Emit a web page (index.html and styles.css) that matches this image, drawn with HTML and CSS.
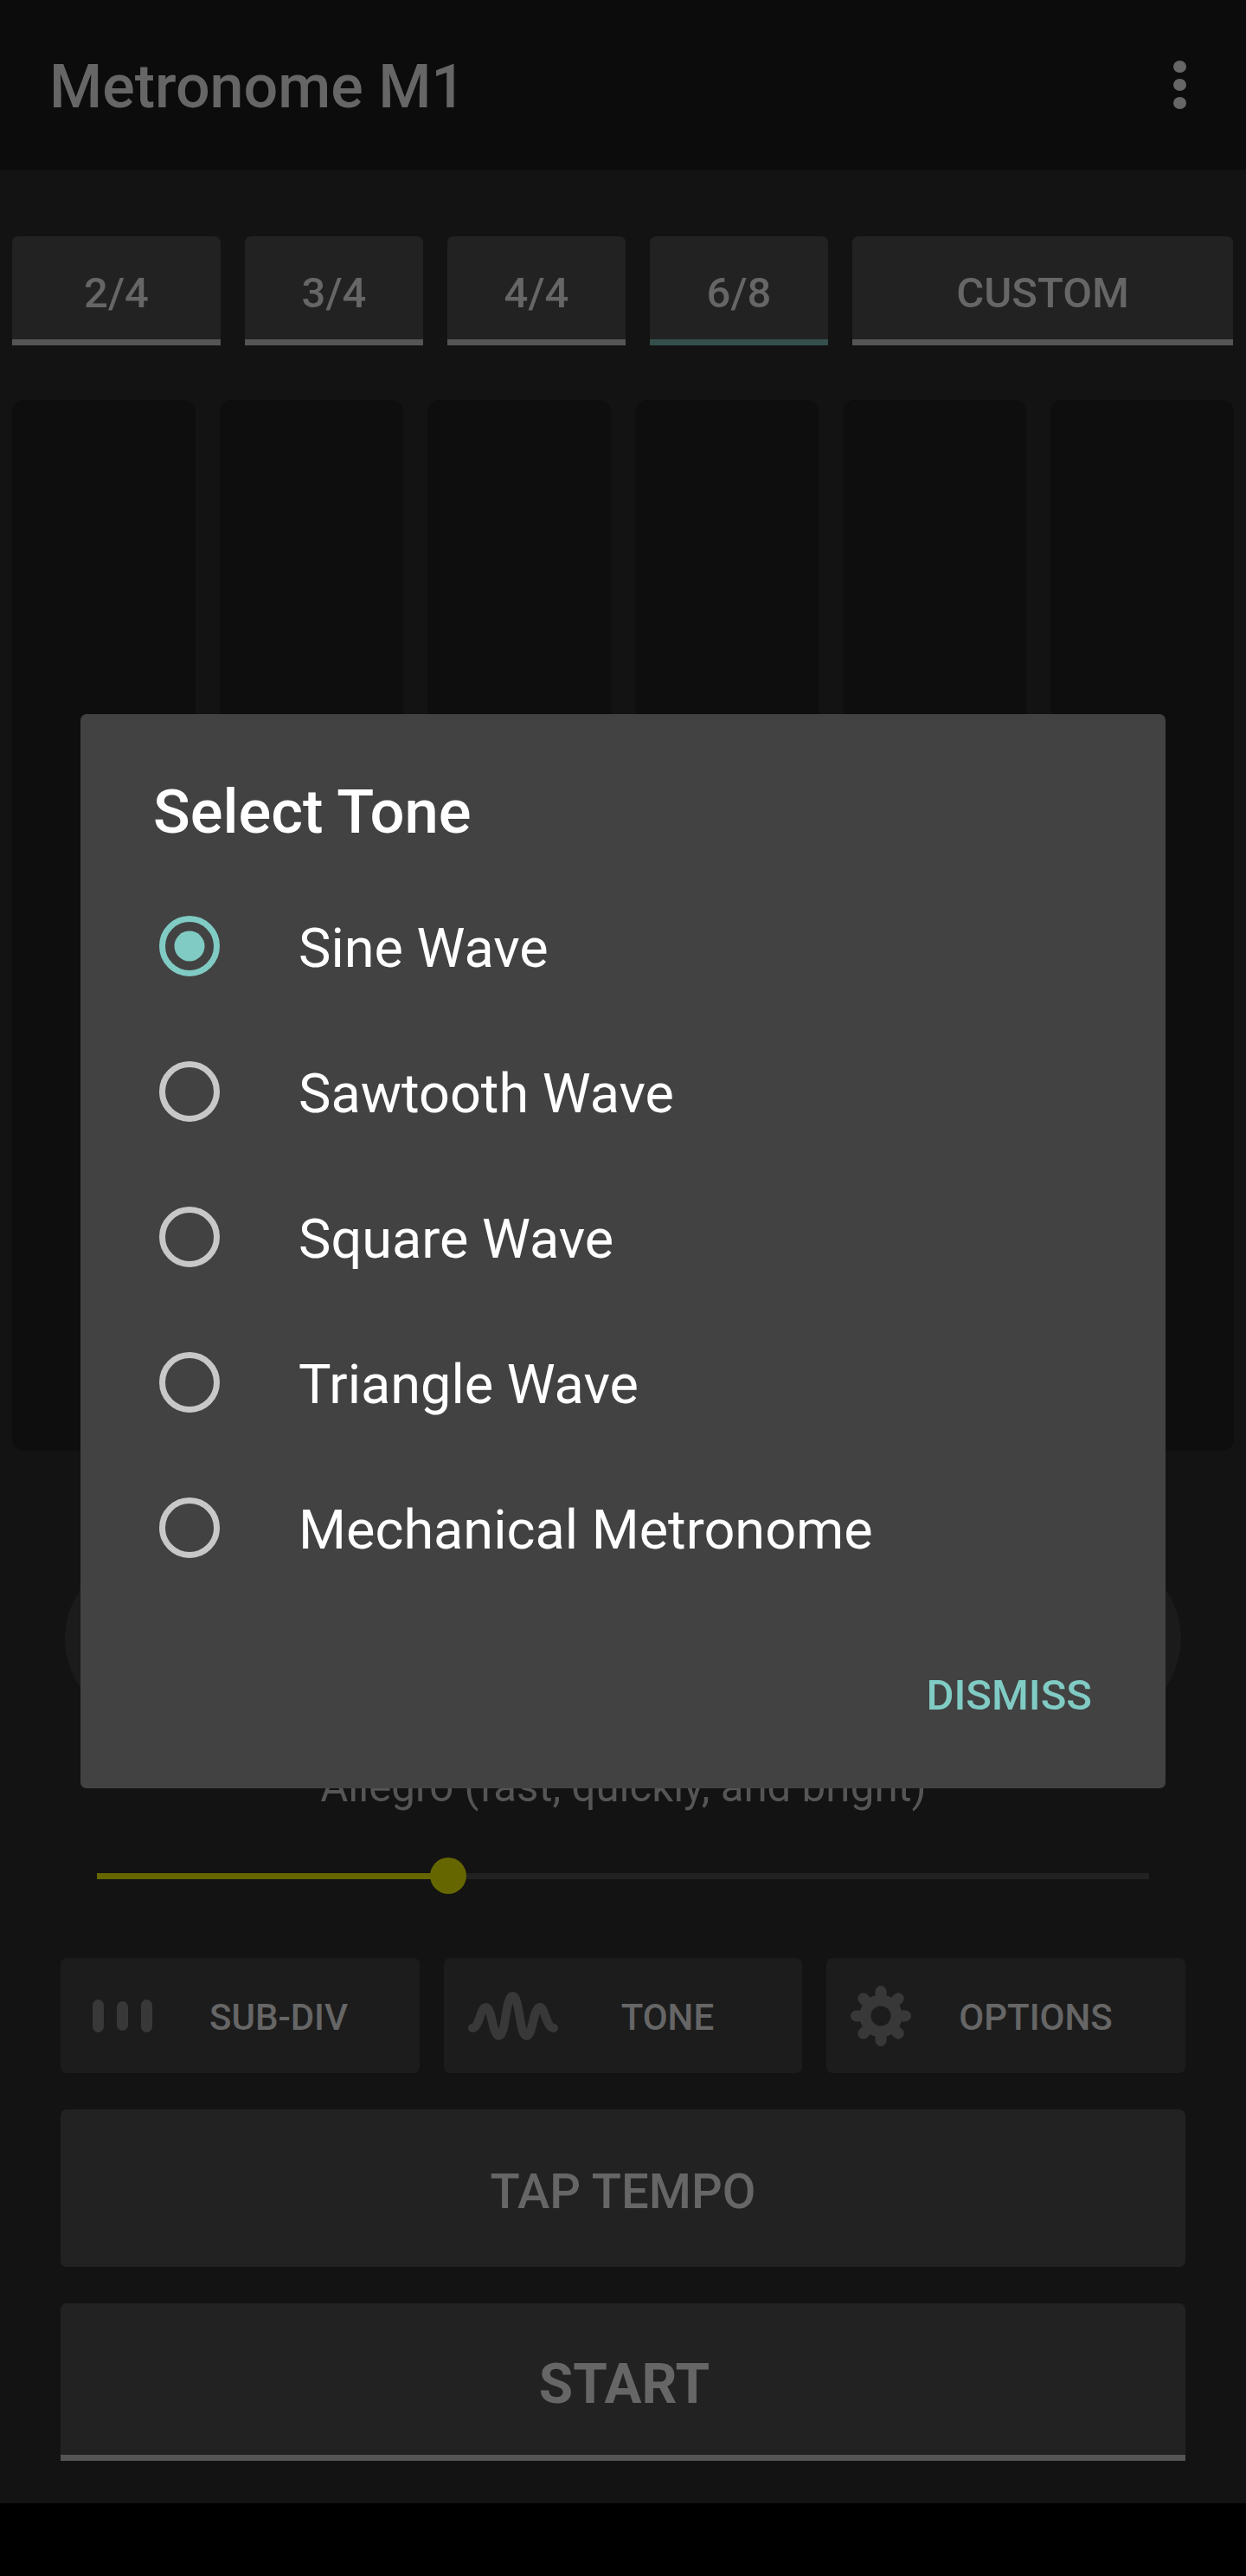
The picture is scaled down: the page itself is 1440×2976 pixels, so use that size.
FILE: index.html
```html
<!DOCTYPE html>
<html lang="en">
<head>
<meta charset="utf-8">
<title>Metronome M1</title>
<link rel="stylesheet" href="styles.css">
</head>
<body>
<div class="app">
  <div class="main">
    <header class="appbar">
      <span class="appbar-title">Metronome M1</span>
      <div class="overflow"><i></i><i></i><i></i></div>
    </header>
    <div class="sig-row">
      <div class="sig sig-first">2/4</div>
      <div class="sig">3/4</div>
      <div class="sig">4/4</div>
      <div class="sig sig-active">6/8</div>
      <div class="sig sig-custom">CUSTOM</div>
    </div>
    <div class="beats">
      <div class="beat"></div><div class="beat"></div><div class="beat"></div>
      <div class="beat"></div><div class="beat"></div><div class="beat"></div>
    </div>
    <div class="dial-row">
      <div class="dial"></div>
      <div class="dial"></div>
    </div>
    <div class="tempo-name">Allegro (fast, quickly, and bright)</div>
    <div class="slider">
      <div class="track-fill"></div>
      <div class="track-rest"></div>
      <div class="thumb"></div>
    </div>
    <div class="controls">
      <div class="ctrl ctrl-subdiv">
        <div class="bars"><i class="bar"></i><i class="bar bar-mid"></i><i class="bar"></i></div>
        <span class="ctrl-label">SUB-DIV</span>
      </div>
      <div class="ctrl ctrl-tone">
        <svg class="wave" viewBox="0 0 106 56" width="106" height="56">
          <path d="M6 42C14 42 15 18 21.5 18C29 18 29 51 36.5 51C45 51 44 5 52.5 5C61 5 60 51 68.5 51C76 51 76 18 84 18C90 18 91 42 100 42" fill="none" stroke="#383838" stroke-width="10" stroke-linecap="round"/>
        </svg>
        <span class="ctrl-label">TONE</span>
      </div>
      <div class="ctrl ctrl-options">
        <svg class="gear" viewBox="0 0 70 70" width="70" height="70">
          <g stroke="#383838" stroke-width="13" stroke-linecap="round">
            <path d="M35 6.5V14M35 56V63.5M6.5 35H14M56 35H63.5M14.8 14.8L20 20M50 50L55.2 55.2M55.2 14.8L50 20M20 50L14.8 55.2"/>
          </g>
          <circle cx="35" cy="35" r="18" fill="none" stroke="#383838" stroke-width="13"/>
        </svg>
        <span class="ctrl-label">OPTIONS</span>
      </div>
    </div>
    <div class="wide wide-tap">TAP TEMPO</div>
    <div class="wide wide-start">START</div>
  </div>
  <div class="navbar"></div>

  <div class="dialog">
    <h2 class="dialog-title">Select Tone</h2>
    <div class="opt">
      <svg class="radio" viewBox="0 0 70 70" width="70" height="70"><circle class="ring-on" cx="35" cy="35" r="31.5"/><circle class="dot" cx="35" cy="35" r="17.5"/></svg>
      <span class="opt-label">Sine Wave</span>
    </div>
    <div class="opt">
      <svg class="radio" viewBox="0 0 70 70" width="70" height="70"><circle class="ring-off" cx="35" cy="35" r="31.5"/></svg>
      <span class="opt-label">Sawtooth Wave</span>
    </div>
    <div class="opt">
      <svg class="radio" viewBox="0 0 70 70" width="70" height="70"><circle class="ring-off" cx="35" cy="35" r="31.5"/></svg>
      <span class="opt-label">Square Wave</span>
    </div>
    <div class="opt">
      <svg class="radio" viewBox="0 0 70 70" width="70" height="70"><circle class="ring-off" cx="35" cy="35" r="31.5"/></svg>
      <span class="opt-label">Triangle Wave</span>
    </div>
    <div class="opt">
      <svg class="radio" viewBox="0 0 70 70" width="70" height="70"><circle class="ring-off" cx="35" cy="35" r="31.5"/></svg>
      <span class="opt-label">Mechanical Metronome</span>
    </div>
    <div class="dialog-actions"><span class="dismiss">DISMISS</span></div>
  </div>
</div>
</body>
</html>
```
FILE: styles.css
```css
* { box-sizing: border-box; }
html, body { margin: 0; padding: 0; background: #000; }
body { font-family: Roboto, "Liberation Sans", sans-serif; color: #666; }
.app { position: relative; width: 1440px; height: 2976px; display: flex; flex-direction: column; overflow: hidden; }
.main { height: 2892px; background: #131313; display: flex; flex-direction: column; }
.navbar { height: 84px; background: #000; }

.appbar { height: 196px; background: #0c0c0c; display: flex; align-items: center; justify-content: space-between; padding: 4px 69px 0 57px; }
.appbar-title { font-size: 70px; font-weight: 500; line-height: 82px; color: #666; }
.overflow { display: flex; flex-direction: column; gap: 7px; margin-bottom: 4px; }
.overflow i { display: block; width: 15px; height: 14px; border-radius: 50%; background: #666; }

.sig-row { display: flex; gap: 28px; height: 126px; margin-top: 77px; padding: 0 15px 0 14px; }
.sig { width: 206px; height: 126px; padding-top: 11px; background: #222; border-bottom: 7px solid #555; border-radius: 7px 7px 0 0; display: flex; align-items: center; justify-content: center; font-size: 49px; font-weight: 500; color: #666; }
.sig-first { width: 241px; }
.sig-active { border-bottom-color: #344f4c; }
.sig-custom { flex: 1; width: auto; }

.beats { display: grid; grid-template-columns: repeat(6, 1fr); gap: 28px; height: 1214px; margin-top: 63px; padding: 0 14px; }
.beat { background: #0e0e0e; border-radius: 14px; }

.dial-row { display: flex; justify-content: space-between; height: 196px; margin-top: 119px; padding: 0 75px; }
.dial { width: 196px; height: 196px; border-radius: 50%; background: #1b1b1b; }

.tempo-name { margin-top: 44px; height: 58px; padding-left: 1px; line-height: 58px; text-align: center; font-size: 49.2px; color: #555; }

.slider { position: relative; display: flex; align-items: center; height: 42px; margin: 53px 112px 0; }
.track-fill { width: 405px; height: 7px; background: #666600; }
.track-rest { flex: 1; height: 7px; background: #222; }
.thumb { position: absolute; left: 385px; top: 0; width: 42px; height: 42px; border-radius: 50%; background: #666600; }

.controls { display: grid; grid-template-columns: repeat(3, 1fr); gap: 28px; height: 133px; margin-top: 74px; padding: 0 70px; }
.ctrl { display: flex; align-items: center; background: #1c1c1c; border-radius: 7px; }
.ctrl-label { margin-top: 4px; font-size: 42px; font-weight: 500; color: #666; white-space: nowrap; }
.bars { display: flex; align-items: center; gap: 15px; margin-left: 37px; }
.bar { display: block; width: 13px; height: 38px; border-radius: 6.5px; background: #383838; }
.bar-mid { height: 34px; }
.ctrl-subdiv .ctrl-label { margin-left: 66px; }
.wave { display: block; margin-left: 27px; }
.ctrl-tone .ctrl-label { margin-left: 72px; }
.gear { display: block; margin-left: 28px; }
.ctrl-options .ctrl-label { margin-left: 55px; }

.wide { display: flex; align-items: center; justify-content: center; height: 182px; margin: 42px 70px 0; background: #222; border-radius: 7px; color: #666; }
.wide-tap { padding-top: 7px; font-size: 56.2px; font-weight: 500; }
.wide-start { font-size: 64px; font-weight: 700; padding: 11px 0 0 3px; border-bottom: 7px solid #555; border-radius: 7px 7px 0 0; }

.dialog { position: absolute; left: 93px; top: 825px; width: 1254px; height: 1241px; padding-top: 72px; background: #424242; border-radius: 7px; display: flex; flex-direction: column; }
.dialog-title { margin: 0 0 30px; padding-left: 84px; font-size: 70.5px; font-weight: 500; line-height: 82px; color: #fff; }
.opt { display: flex; align-items: center; height: 168px; padding-left: 91px; }
.radio { display: block; }
.ring-on, .ring-off { fill: none; stroke-width: 7; }
.ring-on { stroke: #80cbc4; }
.ring-off { stroke: #c8c8c8; }
.dot { fill: #80cbc4; }
.opt-label { margin-top: 5px; margin-left: 91px; font-size: 63px; line-height: 74px; color: #fff; }
.dialog-actions { display: flex; justify-content: flex-end; margin-top: 81px; padding-right: 85px; }
.dismiss { font-size: 49px; font-weight: 500; line-height: 57px; color: #80cbc4; }
```
